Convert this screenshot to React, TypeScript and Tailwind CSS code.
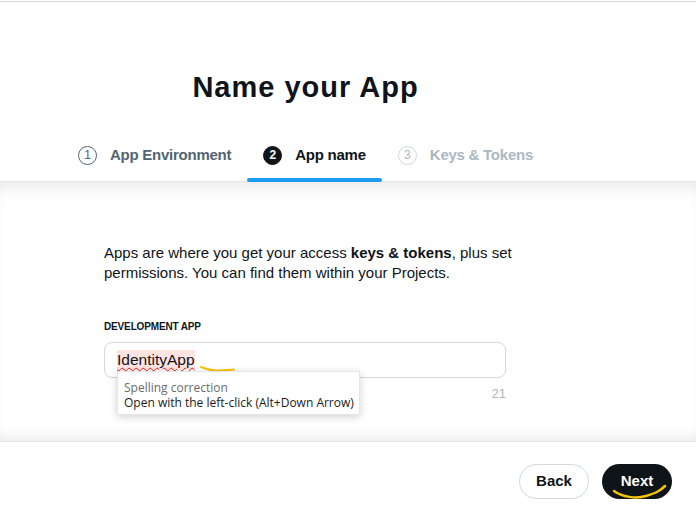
import React from 'react'

const sans = { fontFamily: '"Liberation Sans", Arial, sans-serif' }

type Step = { n: number; label: string; state: 'done' | 'active' | 'todo' }

const steps: Step[] = [
	{ n: 1, label: 'App Environment', state: 'done' },
	{ n: 2, label: 'App name', state: 'active' },
	{ n: 3, label: 'Keys & Tokens', state: 'todo' },
]

function StepTab({ step }: { step: Step }) {
	const circle =
		step.state === 'active'
			? 'bg-[#0f1419] border-[#0f1419] text-white font-bold'
			: step.state === 'done'
				? 'border-[#536471] text-[#536471]'
				: 'border-[#cfd9de] text-[#aab8c2]'
	const text = step.state === 'active' ? 'text-[#0f1419]' : step.state === 'done' ? 'text-[#536471]' : 'text-[#aab8c2]'

	return (
		<div className="relative flex h-[48px] items-center gap-[13px] px-4 pb-[6px]">
			<span className={`flex h-[19px] w-[19px] items-center justify-center rounded-full border text-[12px] leading-none ${circle}`}>{step.n}</span>
			<span className={`text-[15px] font-bold leading-5 tracking-[-0.25px] ${text}`}>{step.label}</span>
			{step.state === 'active' && <span className="absolute bottom-0 left-0 right-0 h-[4px] rounded-full bg-[#1d9bf0]" />}
		</div>
	)
}

export default function App() {
	return (
		<div className="flex h-[519px] w-[696px] flex-col overflow-hidden bg-white text-[#0f1419]" style={sans}>
			<div className="h-[2px] border-b border-[#d6d9db]" />

			{/* header */}
			<div className="relative z-10 h-[180px] border-b border-[#e4e7e9] pt-[67px]">
				<div className="flex w-[611px] flex-col items-center">
					<h1 className="text-[29px] font-bold leading-9 tracking-[1px]">Name your App</h1>
					<div className="mt-[29px] flex">
						{steps.map((s) => (
							<StepTab key={s.n} step={s} />
						))}
					</div>
				</div>
			</div>

			{/* content */}
			<div className="flex-1 bg-white shadow-[inset_0_16px_18px_-12px_rgba(0,0,0,0.1),inset_0_-14px_16px_-12px_rgba(0,0,0,0.1)]">
				<div className="ml-[104px] w-[402px] pt-[61px]">
					<p className="w-[415px] text-[15px] leading-5">
						Apps are where you get your access <b>keys &amp; tokens</b>, plus set permissions. You can find them within your Projects.
					</p>

					<div className="mt-[38px] text-[10px] font-bold uppercase leading-3 tracking-[-0.15px]">Development App</div>

					<div className="relative mt-[9px] flex h-[36px] items-center rounded-[8px] border border-[#cfd9de] px-[12px]">
						<span className="bg-[#fde4e1] text-[15.5px] leading-5 underline decoration-[#e0201b] decoration-wavy decoration-1 underline-offset-[2px]">
							IdentityApp
						</span>
						<svg className="absolute left-[95px] top-[22px]" width="36" height="8" viewBox="0 0 36 8" fill="none">
							<path d="M1 2 C 6 4, 11 5.5, 17 5.5 S 28 5, 34 4.5" stroke="#f5c400" strokeWidth="2" strokeLinecap="round" />
						</svg>

						{/* spelling tooltip */}
						<div
							className="absolute left-[12px] top-[28px] z-20 h-[44px] w-[243px] border border-[#e6e6e6] bg-white pl-[6px] pt-[8px] shadow-[0_2px_8px_rgba(0,0,0,0.18)]"
							style={{ fontFamily: '"Open Sans", "Noto Sans", sans-serif' }}
						>
							<div className="text-[12px] leading-[15px] text-[#6b6b6b]">Spelling correction</div>
							<div className="text-[12px] leading-[15px] text-[#1b1b1b]">Open with the left-click (Alt+Down Arrow)</div>
						</div>
					</div>

					<div className="mt-[8px] text-right text-[13px] leading-4 text-[#aab8c2]">21</div>
				</div>
			</div>

			{/* footer */}
			<div className="flex h-[78px] items-start justify-end gap-[13px] border-t border-[#e6e6e6] bg-white pr-[24px] pt-[22px]">
				<button className="flex h-[35px] w-[70px] items-center justify-center rounded-full border border-[#cfd9de] text-[15px] font-bold text-[#0f1419]">
					Back
				</button>
				<button className="relative flex h-[35px] w-[70px] items-center justify-center rounded-full bg-[#0f1419] text-[15px] font-bold text-white">
					Next
					<svg className="absolute left-[10px] top-[20px]" width="56" height="16" viewBox="0 0 56 16" fill="none">
						<path d="M2 7 C 10 13, 24 15, 34 12 S 48 7, 53 2" stroke="#f5c400" strokeWidth="2.5" strokeLinecap="round" />
					</svg>
				</button>
			</div>
		</div>
	)
}
